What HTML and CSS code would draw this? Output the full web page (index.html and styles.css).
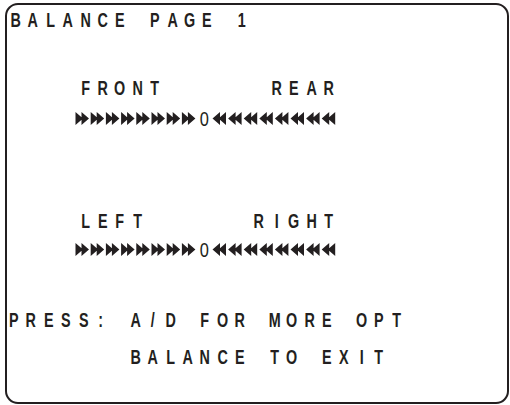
FILE: index.html
```html
<!DOCTYPE html>
<html>
<head>
<meta charset="utf-8">
<link rel="stylesheet" href="styles.css">
</head>
<body>
<div class="screen">
  <div class="row title"><span>B</span><span>A</span><span>L</span><span>A</span><span>N</span><span>C</span><span>E</span><span></span><span>P</span><span>A</span><span>G</span><span>E</span><span></span><span>1</span></div>

  <div class="row front"><span></span><span></span><span></span><span></span><span>F</span><span>R</span><span>O</span><span>N</span><span>T</span><span></span><span></span><span></span><span></span><span></span><span></span><span>R</span><span>E</span><span>A</span><span>R</span></div>
  <div class="row bar bar-one">
    <svg class="arrows" width="122" height="13" viewBox="0 0 122 13"><path d="M0.5 0L8 6.5L0.5 13ZM6.5 0L14 6.5L6.5 13ZM15.7 0L23.2 6.5L15.7 13ZM21.7 0L29.2 6.5L21.7 13ZM30.9 0L38.4 6.5L30.9 13ZM36.9 0L44.4 6.5L36.9 13ZM46.1 0L53.6 6.5L46.1 13ZM52.1 0L59.6 6.5L52.1 13ZM61.3 0L68.8 6.5L61.3 13ZM67.3 0L74.8 6.5L67.3 13ZM76.5 0L84 6.5L76.5 13ZM82.5 0L90 6.5L82.5 13ZM91.7 0L99.2 6.5L91.7 13ZM97.7 0L105.2 6.5L97.7 13ZM106.9 0L114.4 6.5L106.9 13ZM112.9 0L120.4 6.5L112.9 13Z"/></svg>
    <span class="zero">0</span>
    <svg class="arrows" width="124" height="13" viewBox="0 0 124 13"><path d="M0.5 6.5L8 0L8 13ZM6.5 6.5L14 0L14 13ZM16.1 6.5L23.6 0L23.6 13ZM22.1 6.5L29.6 0L29.6 13ZM31.7 6.5L39.2 0L39.2 13ZM37.7 6.5L45.2 0L45.2 13ZM47.3 6.5L54.8 0L54.8 13ZM53.3 6.5L60.8 0L60.8 13ZM62.9 6.5L70.4 0L70.4 13ZM68.9 6.5L76.4 0L76.4 13ZM78.5 6.5L86 0L86 13ZM84.5 6.5L92 0L92 13ZM94.1 6.5L101.6 0L101.6 13ZM100.1 6.5L107.6 0L107.6 13ZM109.7 6.5L117.2 0L117.2 13ZM115.7 6.5L123.2 0L123.2 13Z"/></svg>
  </div>

  <div class="row left-right"><span></span><span></span><span></span><span></span><span>L</span><span>E</span><span>F</span><span>T</span><span></span><span></span><span></span><span></span><span></span><span></span><span>R</span><span>I</span><span>G</span><span>H</span><span>T</span></div>
  <div class="row bar bar-two">
    <svg class="arrows" width="122" height="13" viewBox="0 0 122 13"><path d="M0.5 0L8 6.5L0.5 13ZM6.5 0L14 6.5L6.5 13ZM15.7 0L23.2 6.5L15.7 13ZM21.7 0L29.2 6.5L21.7 13ZM30.9 0L38.4 6.5L30.9 13ZM36.9 0L44.4 6.5L36.9 13ZM46.1 0L53.6 6.5L46.1 13ZM52.1 0L59.6 6.5L52.1 13ZM61.3 0L68.8 6.5L61.3 13ZM67.3 0L74.8 6.5L67.3 13ZM76.5 0L84 6.5L76.5 13ZM82.5 0L90 6.5L82.5 13ZM91.7 0L99.2 6.5L91.7 13ZM97.7 0L105.2 6.5L97.7 13ZM106.9 0L114.4 6.5L106.9 13ZM112.9 0L120.4 6.5L112.9 13Z"/></svg>
    <span class="zero">0</span>
    <svg class="arrows" width="124" height="13" viewBox="0 0 124 13"><path d="M0.5 6.5L8 0L8 13ZM6.5 6.5L14 0L14 13ZM16.1 6.5L23.6 0L23.6 13ZM22.1 6.5L29.6 0L29.6 13ZM31.7 6.5L39.2 0L39.2 13ZM37.7 6.5L45.2 0L45.2 13ZM47.3 6.5L54.8 0L54.8 13ZM53.3 6.5L60.8 0L60.8 13ZM62.9 6.5L70.4 0L70.4 13ZM68.9 6.5L76.4 0L76.4 13ZM78.5 6.5L86 0L86 13ZM84.5 6.5L92 0L92 13ZM94.1 6.5L101.6 0L101.6 13ZM100.1 6.5L107.6 0L107.6 13ZM109.7 6.5L117.2 0L117.2 13ZM115.7 6.5L123.2 0L123.2 13Z"/></svg>
  </div>

  <div class="row press"><span>P</span><span>R</span><span>E</span><span>S</span><span>S</span><span>:</span><span></span><span>A</span><span>/</span><span>D</span><span></span><span>F</span><span>O</span><span>R</span><span></span><span>M</span><span>O</span><span>R</span><span>E</span><span></span><span>O</span><span>P</span><span>T</span></div>
  <div class="row exit"><span></span><span></span><span></span><span></span><span></span><span></span><span></span><span>B</span><span>A</span><span>L</span><span>A</span><span>N</span><span>C</span><span>E</span><span></span><span>T</span><span>O</span><span></span><span>E</span><span>X</span><span>I</span><span>T</span></div>
</div>
</body>
</html>
```

FILE: styles.css
```css
html, body {
  margin: 0;
  padding: 0;
  background: #ffffff;
}

.screen {
  box-sizing: border-box;
  height: 401px;
  margin: 3px 1px 0 5px;
  padding: 4px 0 0 0;
  border: 2px solid #231f20;
  border-radius: 13px;
  color: #231f20;
  font-family: "Liberation Sans", Arial, sans-serif;
  font-weight: 700;
  font-size: 20.5px;
  line-height: 21px;
}

.row {
  display: flex;
  height: 21px;
}

.row span {
  flex: 0 0 17.4px;
  text-align: center;
  transform: scaleX(0.7);
}

.front { margin-top: 47px; }
.left-right { margin-top: 81px; }

.bar {
  align-items: center;
  padding-left: 68px;
}
.bar-one { margin-top: 10px; }
.bar-two { margin-top: 8px; }

.arrows {
  display: block;
  fill: #231f20;
}

.row .zero {
  flex: 0 0 14.6px;
  font-weight: 400;
  transform: scaleX(0.8);
}

.press {
  margin-top: 49px;
  margin-left: -2px;
}
.exit {
  margin-top: 16px;
  margin-left: -2px;
}
```
